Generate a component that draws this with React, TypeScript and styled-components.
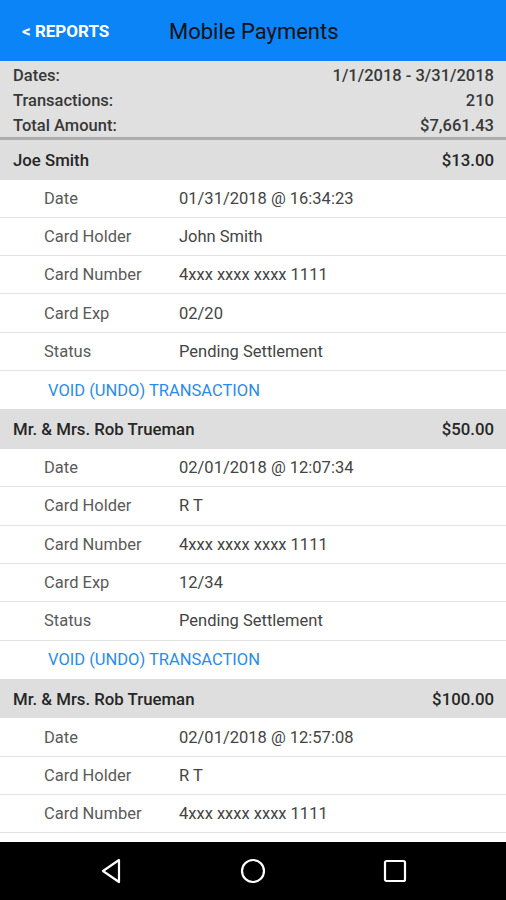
import * as React from "react";
import styled, { createGlobalStyle } from "styled-components";

interface Transaction {
  name: string;
  amount: string;
  date: string;
  holder: string;
  number: string;
  exp: string;
  status: string;
}

const transactions: Transaction[] = [
  {
    name: "Joe Smith",
    amount: "$13.00",
    date: "01/31/2018 @ 16:34:23",
    holder: "John Smith",
    number: "4xxx xxxx xxxx 1111",
    exp: "02/20",
    status: "Pending Settlement",
  },
  {
    name: "Mr. & Mrs. Rob Trueman",
    amount: "$50.00",
    date: "02/01/2018 @ 12:07:34",
    holder: "R T",
    number: "4xxx xxxx xxxx 1111",
    exp: "12/34",
    status: "Pending Settlement",
  },
  {
    name: "Mr. & Mrs. Rob Trueman",
    amount: "$100.00",
    date: "02/01/2018 @ 12:57:08",
    holder: "R T",
    number: "4xxx xxxx xxxx 1111",
    exp: "11/22",
    status: "Pending Settlement",
  },
];

const GlobalStyle = createGlobalStyle`
  html, body {
    margin: 0;
    padding: 0;
    background: #fff;
    font-family: Roboto, "Noto Sans", Arial, sans-serif;
  }
`;

const Screen = styled.div`
  width: 506px;
  height: 900px;
  display: flex;
  flex-direction: column;
  overflow: hidden;
`;

const TopBar = styled.div`
  height: 61px;
  flex-shrink: 0;
  background: #0b84f8;
  display: flex;
  align-items: center;
  padding-left: 22px;
  box-sizing: border-box;
`;

const BackLink = styled.div`
  color: #fff;
  font-weight: 700;
  font-size: 17px;
  width: 147px;
  margin-top: 1px;
`;

const Title = styled.div`
  color: #111;
  font-size: 22px;
  margin-top: 1px;
`;

const Summary = styled.div`
  background: #e0e0e0;
  border-bottom: 3px solid #acacac;
  padding: 2px 12px 0 13px;
  height: 79px;
  box-sizing: border-box;
  flex-shrink: 0;
`;

const SummaryRow = styled.div`
  display: flex;
  justify-content: space-between;
  height: 25px;
  line-height: 25px;
  font-size: 16.5px;
  font-weight: 500;
  color: #383838;
`;

const List = styled.div`
  flex: 1;
  overflow: hidden;
`;

const GroupHeader = styled.div`
  height: 39.5px;
  background: #dedede;
  display: flex;
  align-items: center;
  justify-content: space-between;
  padding: 0 12px 0 13px;
  font-size: 16.8px;
  font-weight: 500;
  color: #262626;
`;

const DetailRow = styled.div`
  height: 38.33px;
  box-sizing: border-box;
  border-bottom: 1px solid #e2e2e2;
  display: flex;
  align-items: center;
  padding-left: 44px;
  font-size: 16.5px;
`;

const Label = styled.div`
  width: 135px;
  color: #5a5a5a;
`;

const Value = styled.div`
  color: #444;
`;

const VoidRow = styled.div`
  height: 38.33px;
  display: flex;
  align-items: center;
  padding-left: 48px;
  font-size: 16.5px;
  color: #2a8cec;
`;

const NavBar = styled.div`
  height: 58px;
  flex-shrink: 0;
  background: #000;
  display: flex;
  align-items: center;
  justify-content: center;
  gap: 102px;
`;

const NavButton = styled.div`
  width: 40px;
  display: flex;
  justify-content: center;
`;

const rows = (t: Transaction): [string, string][] => [
  ["Date", t.date],
  ["Card Holder", t.holder],
  ["Card Number", t.number],
  ["Card Exp", t.exp],
  ["Status", t.status],
];

const App: React.FC = () => (
  <Screen>
    <GlobalStyle />
    <TopBar>
      <BackLink>&lt; REPORTS</BackLink>
      <Title>Mobile Payments</Title>
    </TopBar>
    <Summary>
      <SummaryRow>
        <span>Dates:</span>
        <span>1/1/2018 - 3/31/2018</span>
      </SummaryRow>
      <SummaryRow>
        <span>Transactions:</span>
        <span>210</span>
      </SummaryRow>
      <SummaryRow>
        <span>Total Amount:</span>
        <span>$7,661.43</span>
      </SummaryRow>
    </Summary>
    <List>
      {transactions.map((t, i) => (
        <div key={i}>
          <GroupHeader>
            <span>{t.name}</span>
            <span>{t.amount}</span>
          </GroupHeader>
          {rows(t).map(([label, value]) => (
            <DetailRow key={label}>
              <Label>{label}</Label>
              <Value>{value}</Value>
            </DetailRow>
          ))}
          <VoidRow>VOID (UNDO) TRANSACTION</VoidRow>
        </div>
      ))}
    </List>
    <NavBar>
      <NavButton>
        <svg width="22" height="26" viewBox="0 0 22 26">
          <path d="M19 2 L3 13 L19 24 Z" fill="none" stroke="#fff" strokeWidth="2.2" strokeLinejoin="round" />
        </svg>
      </NavButton>
      <NavButton>
        <svg width="26" height="26" viewBox="0 0 26 26">
          <circle cx="13" cy="13" r="11" fill="none" stroke="#fff" strokeWidth="2.2" />
        </svg>
      </NavButton>
      <NavButton>
        <svg width="24" height="24" viewBox="0 0 24 24">
          <rect x="2" y="2" width="20" height="20" rx="1.5" fill="none" stroke="#fff" strokeWidth="2.2" />
        </svg>
      </NavButton>
    </NavBar>
  </Screen>
);

export default App;
